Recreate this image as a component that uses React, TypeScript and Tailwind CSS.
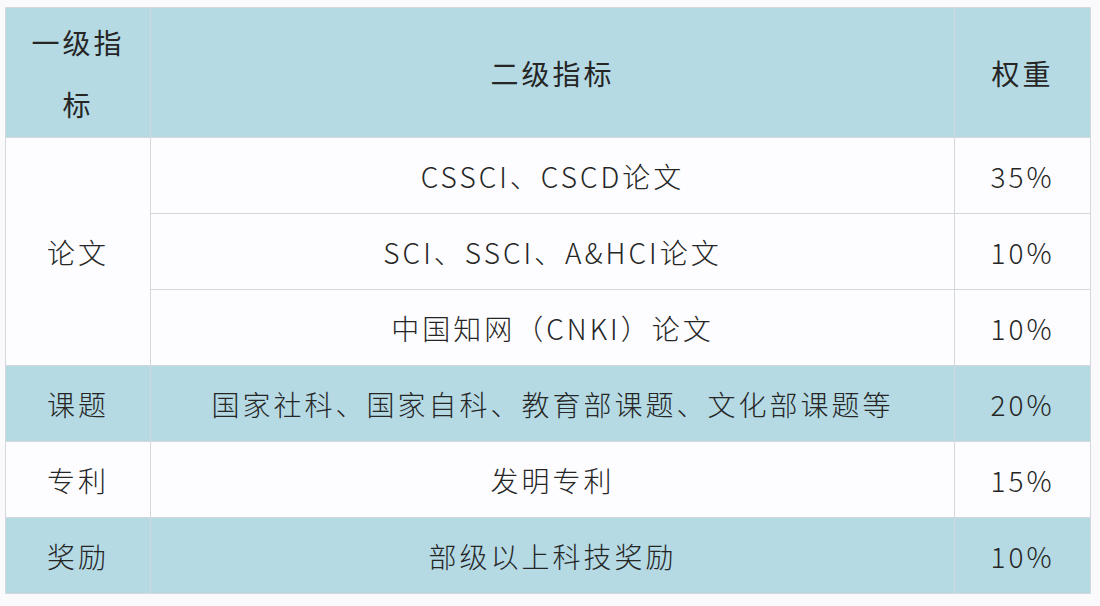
import React from 'react'

type Row = { name: string; weight: string; shade: boolean }

const font = { fontFamily: '"Noto Sans CJK SC", "Noto Sans", sans-serif' }

const paperRows: Row[] = [
  { name: 'CSSCI、CSCD论文', weight: '35%', shade: false },
  { name: 'SCI、SSCI、A&HCI论文', weight: '10%', shade: false },
  { name: '中国知网（CNKI）论文', weight: '10%', shade: false },
]

const otherRows: { first: string; name: string; weight: string; shade: boolean }[] = [
  { first: '课题', name: '国家社科、国家自科、教育部课题、文化部课题等', weight: '20%', shade: true },
  { first: '专利', name: '发明专利', weight: '15%', shade: false },
  { first: '奖励', name: '部级以上科技奖励', weight: '10%', shade: true },
]

const cell = 'border border-[#d3d8dc] text-center align-middle p-0'

export default function App() {
  return (
    <div className="w-[1100px] h-[606px] bg-[#fafafc] pt-[7px] pl-[5px]" style={font}>
      <table className="border-collapse w-[1085px] table-fixed text-[28px] text-[#262626] tracking-[3px] font-light">
        <colgroup>
          <col className="w-[145px]" />
          <col className="w-[804px]" />
          <col className="w-[136px]" />
        </colgroup>
        <thead>
          <tr className="h-[130px] bg-[#b5dae4]">
            <th className={cell + ' font-normal leading-[62px] px-[24px]'}>一级指标</th>
            <th className={cell + ' font-normal'}>二级指标</th>
            <th className={cell + ' font-normal'}>权重</th>
          </tr>
        </thead>
        <tbody className="bg-[#fdfdff]">
          {paperRows.map((r, i) => (
            <tr key={r.name} className="h-[76px]">
              {i === 0 && (
                <td rowSpan={3} className={cell}>
                  论文
                </td>
              )}
              <td className={cell}>{r.name}</td>
              <td className={cell}>{r.weight}</td>
            </tr>
          ))}
          {otherRows.map((r) => (
            <tr key={r.first} className={'h-[76px] ' + (r.shade ? 'bg-[#b5dae4]' : 'bg-[#fdfdff]')}>
              <td className={cell}>{r.first}</td>
              <td className={cell}>{r.name}</td>
              <td className={cell}>{r.weight}</td>
            </tr>
          ))}
        </tbody>
      </table>
    </div>
  )
}
